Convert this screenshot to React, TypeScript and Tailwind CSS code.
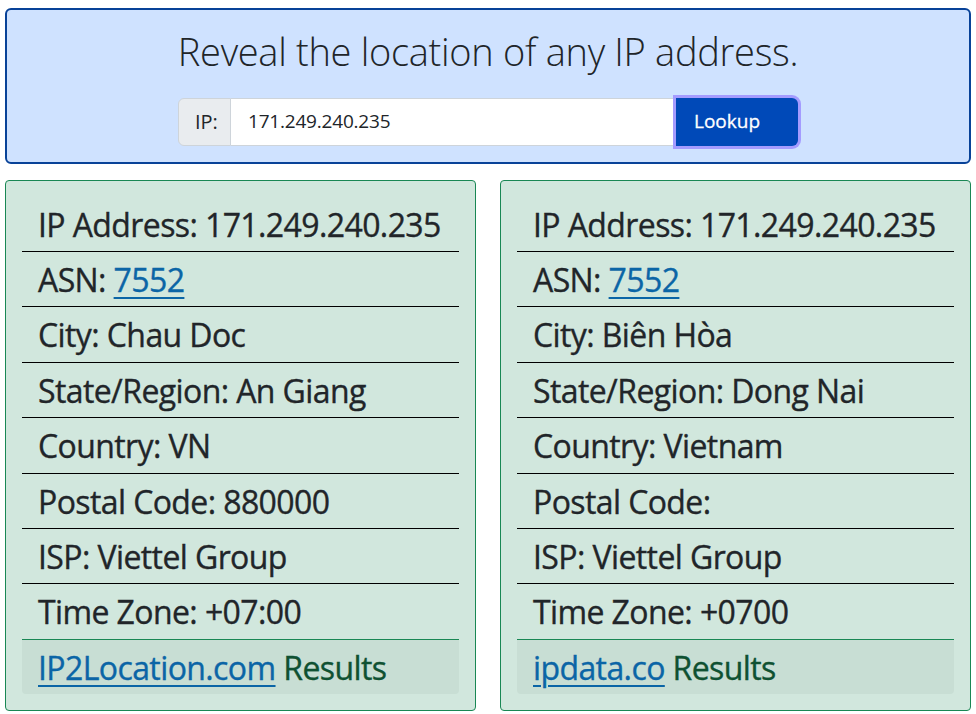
const left = {
  ip: '171.249.240.235',
  asn: '7552',
  city: 'Chau Doc',
  region: 'An Giang',
  country: 'VN',
  postal: '880000',
  isp: 'Viettel Group',
  tz: '+07:00',
  source: 'IP2Location.com',
}

const right = {
  ip: '171.249.240.235',
  asn: '7552',
  city: 'Biên Hòa',
  region: 'Dong Nai',
  country: 'Vietnam',
  postal: '',
  isp: 'Viettel Group',
  tz: '+0700',
  source: 'ipdata.co',
}

type Result = typeof left

const Row = ({ children }: { children: React.ReactNode }) => (
  <li className="whitespace-nowrap border-b border-black px-4 pb-[7px] pt-[9px] leading-[1.2]">{children}</li>
)

const ResultCard = ({ r }: { r: Result }) => (
  <div className="rounded border border-[#198754] bg-[#d1e7dd] p-4">
    <ul className="text-[32px] tracking-[-0.6px] text-[#212529] [-webkit-text-stroke:0.35px_currentColor]">
      <Row>IP Address: {r.ip}</Row>
      <Row>
        ASN: <a href="#" className="text-[#0b65a6] underline decoration-2 underline-offset-[5px]">{r.asn}</a>
      </Row>
      <Row>City: {r.city}</Row>
      <Row>State/Region: {r.region}</Row>
      <Row>Country: {r.country}</Row>
      <Row>Postal Code: {r.postal}</Row>
      <Row>ISP: {r.isp}</Row>
      <li className="whitespace-nowrap border-b border-[#198754] px-4 pb-[7px] pt-[9px] leading-[1.2]">
        Time Zone: {r.tz}
      </li>
      <li className="whitespace-nowrap rounded-b bg-[#c8ded4] px-4 pb-[7px] pt-[9px] leading-[1.2] text-[#0f5132]">
        <a href="#" className="text-[#0b65a6] underline decoration-2 underline-offset-[5px]">{r.source}</a> Results
      </li>
    </ul>
  </div>
)

export default function App() {
  return (
    <div className="min-h-screen bg-white px-[5px] pt-2 font-['Open_Sans','Noto_Sans',sans-serif]">
      {/* lookup banner */}
      <div className="rounded-md border-2 border-[#084298] bg-[#cfe2ff] px-4 pb-4 pt-[19px]">
        <h1 className="text-center text-[38px] font-light leading-[1.2] tracking-[-0.3px] text-[#212529]">
          Reveal the location of any IP address.
        </h1>
        <div className="mx-auto mt-[23px] flex h-12 w-[620px] text-[20px]">
          <span className="flex w-[53px] items-center rounded-l-md border border-[#ced4da] bg-[#e9ecef] px-4 text-[#212529]">
            IP:
          </span>
          <input
            className="min-w-0 flex-1 border-y border-[#ced4da] bg-white px-[17px] text-[19px] tracking-[-0.2px] text-[#212529] outline-none"
            defaultValue="171.249.240.235"
          />
          <button className="w-[122px] rounded-r-md bg-[#0049b8] pl-[18px] text-left text-[19px] text-white shadow-[0_0_0_3px_#a49bff] [-webkit-text-stroke:0.3px_currentColor]">
            Lookup
          </button>
        </div>
      </div>

      {/* results */}
      <div className="mt-4 grid grid-cols-2 gap-6">
        <ResultCard r={left} />
        <ResultCard r={right} />
      </div>
    </div>
  )
}
